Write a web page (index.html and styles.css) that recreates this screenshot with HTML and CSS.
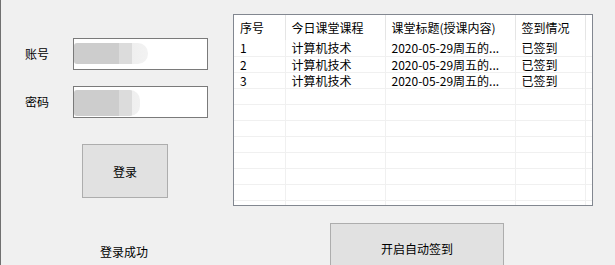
FILE: index.html
```html
<!DOCTYPE html>
<html lang="zh-CN">
<head>
    <meta charset="UTF-8">
    <title>自动签到</title>
    <link rel="stylesheet" href="styles.css">
</head>
<body>
    <div class="window">
        <div class="left">
            <div class="field first">
                <span class="label">账号</span>
                <div class="box"><span class="blur b1"></span></div>
            </div>
            <div class="field">
                <span class="label">密码</span>
                <div class="box"><span class="blur b2"></span></div>
            </div>
            <button class="btn login">登录</button>
            <div class="status">登录成功</div>
        </div>
        <div class="right">
            <div class="list">
                <table>
                    <tr class="head">
                        <th class="c1">序号</th>
                        <th class="c2">今日课堂课程</th>
                        <th class="c3">课堂标题(授课内容)</th>
                        <th class="c4">签到情况</th>
                        <th class="c5"></th>
                    </tr>
                    <tr><td>1</td><td>计算机技术</td><td>2020-05-29周五的...</td><td>已签到</td><td></td></tr>
                    <tr><td>2</td><td>计算机技术</td><td>2020-05-29周五的...</td><td>已签到</td><td></td></tr>
                    <tr><td>3</td><td>计算机技术</td><td>2020-05-29周五的...</td><td>已签到</td><td></td></tr>
                    <tr><td></td><td></td><td></td><td></td><td></td></tr>
                    <tr><td></td><td></td><td></td><td></td><td></td></tr>
                    <tr><td></td><td></td><td></td><td></td><td></td></tr>
                    <tr><td></td><td></td><td></td><td></td><td></td></tr>
                    <tr><td></td><td></td><td></td><td></td><td></td></tr>
                    <tr><td></td><td></td><td></td><td></td><td></td></tr>
                    <tr><td></td><td></td><td></td><td></td><td></td></tr>
                    <tr><td></td><td></td><td></td><td></td><td></td></tr>
                </table>
            </div>
            <button class="btn auto">开启自动签到</button>
        </div>
    </div>
</body>
</html>
```

FILE: styles.css
```css
body {
    margin: 0;
    background-color: #f0f0f0;
    font-family: "Noto Sans CJK SC", "DejaVu Sans", sans-serif;
    font-size: 12px;
    color: #000;
}
.window {
    display: flex;
    height: 265px;
    border-left: 1px solid #707070;
    overflow: hidden;
}
.left {
    width: 232px;
    padding-left: 24px;
    box-sizing: border-box;
}
.field {
    display: flex;
    align-items: center;
    margin-top: 16px;
}
.field.first {
    margin-top: 38px;
}
.label {
    width: 48px;
    line-height: 16px;
}
.box {
    width: 133px;
    height: 30px;
    border: 1px solid #7a7a7a;
    background-color: #fff;
    position: relative;
}
.blur {
    position: absolute;
    left: 0;
    border-radius: 3px 10px 10px 3px;
    background: linear-gradient(to right, #cdcdcd 0, #cdcdcd 45px, #dcdcdc 45px, #dcdcdc 58px, #efefef 58px, #f3f3f3 76px, rgba(255,255,255,0) 76px);
}
.b1 {
    top: 4px;
    width: 74px;
    height: 21px;
}
.b2 {
    top: 3px;
    width: 66px;
    height: 26px;
}
.btn {
    display: block;
    font-family: inherit;
    font-size: 12px;
    color: #000;
    background-color: #e1e1e1;
    border: 1px solid #adadad;
    padding: 0;
}
.login {
    margin: 26px 0 0 57px;
    width: 86px;
    height: 54px;
}
.status {
    margin: 46px 0 0 75px;
    line-height: 16px;
}
.right {
    padding-top: 14px;
}
.list {
    width: 358px;
    height: 190px;
    border: 1px solid #828790;
    background-color: #fff;
    overflow: hidden;
}
table {
    border-collapse: collapse;
    table-layout: fixed;
    width: 357px;
}
th, td {
    box-sizing: border-box;
    padding: 0 0 0 6px;
    text-align: left;
    font-weight: normal;
    white-space: nowrap;
    overflow: hidden;
    border-right: 1px solid #f0f0f0;
}
.head th {
    height: 25px;
    border-right: 1px solid #e5e5e5;
}
td {
    height: 16px;
    line-height: 15px;
    border-bottom: 1px solid #f0f0f0;
}
.c1 { width: 51px; }
.c2 { width: 100px; }
.c3 { width: 130px; }
.c4 { width: 70px; }
.c5 { width: 6px; }
.auto {
    margin: 17px 0 0 97px;
    width: 174px;
    height: 50px;
}
```
